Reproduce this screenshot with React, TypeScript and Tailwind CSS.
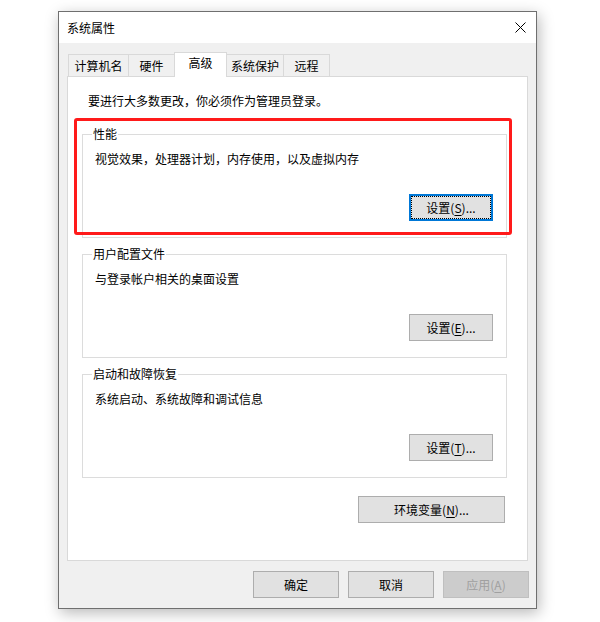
import React from 'react';

const tabs = [
  { label: '计算机名', w: 'w-[61px]' },
  { label: '硬件', w: 'w-[47px]' },
  { label: '高级', w: 'w-[53px]', active: true },
  { label: '系统保护', w: 'w-[58px]' },
  { label: '远程', w: 'w-[47px]' },
];

const WinButton = ({
  label,
  mnemonic,
  rest,
  w,
  focused,
  disabled,
}: {
  label: string;
  mnemonic?: string;
  rest?: string;
  w: string;
  focused?: boolean;
  disabled?: boolean;
}) => {
  const base = disabled
    ? 'bg-[#cccccc] border border-[#bfbfbf] text-[#a0a0a0]'
    : focused
      ? 'bg-[#e1e1e1] border-2 border-[#0078d7] text-black'
      : 'bg-[#e1e1e1] border border-[#adadad] text-black';
  return (
    <div className={`relative h-[27px] ${w} ${base} flex items-center justify-center text-[12px] leading-[16px]`}>
      {focused && <span className="absolute inset-0 border border-dotted border-black" />}
      <span>
        {label}
        {mnemonic && (
          <>
            (<span className="underline underline-offset-2">{mnemonic}</span>){rest}
          </>
        )}
      </span>
    </div>
  );
};

const Group = ({
  title,
  desc,
  button,
  highlight,
}: {
  title: string;
  desc: string;
  button: React.ReactNode;
  highlight?: boolean;
}) => (
  <div className="relative ml-[14px] w-[425px] h-[104px] border border-[#dcdcdc] pt-[16px] pl-[12px] pr-[13px] pb-[16px] flex flex-col">
    <span className="absolute -top-[9px] left-[9px] bg-white px-px leading-[16px]">{title}</span>
    <div className="leading-[16px]">{desc}</div>
    <div className="mt-auto flex justify-end">{button}</div>
    {highlight && (
      <div className="absolute -left-[9px] -top-[17px] w-[438px] h-[117px] border-[3px] border-[#ff1a1a] rounded-[3px]" />
    )}
  </div>
);

export default function App() {
  return (
    <div
      className="w-[600px] h-[622px] bg-white pl-[58px] pt-[11px] text-[12px] text-black"
      style={{ fontFamily: '"Noto Sans CJK SC", "Microsoft YaHei", sans-serif' }}
    >
      <div className="w-[479px] h-[598px] border border-[#6f6f6f] bg-[#f0f0f0] flex flex-col shadow-[2px_4px_14px_rgba(0,0,0,0.28)]">
        {/* title bar */}
        <div className="h-[31px] bg-white flex items-center justify-between pl-[8px] pr-[10px]">
          <span className="leading-[16px]">系统属性</span>
          <svg width="11" height="11" viewBox="0 0 11 11">
            <path d="M0.5 0.5 L10.5 10.5 M10.5 0.5 L0.5 10.5" stroke="#000" strokeWidth="1" />
          </svg>
        </div>

        {/* body */}
        <div className="flex-1 flex flex-col pt-[9px] px-[8px]">
          <div className="relative z-10 h-[25px] flex items-end pl-[1px]">
            {tabs.map((t, i) =>
              t.active ? (
                <div
                  key={t.label}
                  className={`${t.w} h-[25px] ${i > 0 ? '-ml-px' : ''} bg-white border-t border-l border-r border-[#d9d9d9] flex justify-center pt-[2px] leading-[16px]`}
                >
                  {t.label}
                </div>
              ) : (
                <div
                  key={t.label}
                  className={`${t.w} h-[23px] ${i > 0 ? '-ml-px' : ''} bg-[#f0f0f0] border border-[#d9d9d9] flex justify-center pt-[3px] leading-[16px]`}
                >
                  {t.label}
                </div>
              ),
            )}
          </div>

          <div className="-mt-px w-[461px] h-[485px] bg-white border border-[#d9d9d9] flex flex-col pt-[16px]">
            <div className="pl-[20px] leading-[16px]">要进行大多数更改，你必须作为管理员登录。</div>

            <div className="mt-[25px] flex flex-col gap-[16px]">
              <Group
                title="性能"
                desc="视觉效果，处理器计划，内存使用，以及虚拟内存"
                highlight
                button={<WinButton label="设置" mnemonic="S" rest="..." w="w-[84px]" focused />}
              />
              <Group
                title="用户配置文件"
                desc="与登录帐户相关的桌面设置"
                button={<WinButton label="设置" mnemonic="E" rest="..." w="w-[84px]" />}
              />
              <Group
                title="启动和故障恢复"
                desc="系统启动、系统故障和调试信息"
                button={<WinButton label="设置" mnemonic="T" rest="..." w="w-[84px]" />}
              />
            </div>

            <div className="mt-[18px] flex justify-end pr-[22px]">
              <WinButton label="环境变量" mnemonic="N" rest="..." w="w-[147px]" />
            </div>
          </div>

          <div className="mt-[10px] flex justify-end gap-[9px] -mr-px">
            <WinButton label="确定" w="w-[86px]" />
            <WinButton label="取消" w="w-[86px]" />
            <WinButton label="应用" mnemonic="A" w="w-[86px]" disabled />
          </div>
        </div>
      </div>
    </div>
  );
}
